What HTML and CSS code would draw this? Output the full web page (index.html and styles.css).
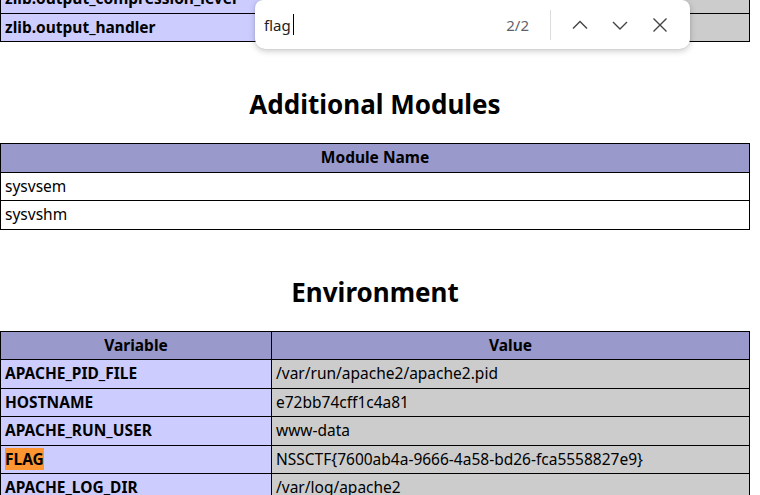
FILE: index.html
```html
<!DOCTYPE html>
<html lang="en">
<head>
<meta charset="utf-8">
<title>phpinfo()</title>
<link rel="stylesheet" href="styles.css">
</head>
<body>
<div class="page">
  <table class="info top">
    <tr><td class="e">zlib.output_compression_level</td><td class="v">-1</td><td class="v">-1</td></tr>
    <tr><td class="e">zlib.output_handler</td><td class="v"><i>no value</i></td><td class="v"><i>no value</i></td></tr>
  </table>

  <h2 class="section-title">Additional Modules</h2>
  <table class="info">
    <tr class="h"><th>Module Name</th></tr>
    <tr><td>sysvsem</td></tr>
    <tr><td>sysvshm</td></tr>
  </table>

  <h2 class="section-title">Environment</h2>
  <table class="info env">
    <tr class="h"><th class="col-var">Variable</th><th>Value</th></tr>
    <tr><td class="e">APACHE_PID_FILE</td><td class="v">/var/run/apache2/apache2.pid</td></tr>
    <tr><td class="e">HOSTNAME</td><td class="v">e72bb74cff1c4a81</td></tr>
    <tr><td class="e">APACHE_RUN_USER</td><td class="v">www-data</td></tr>
    <tr><td class="e"><mark class="hit">FLAG</mark></td><td class="v">NSSCTF{7600ab4a-9666-4a58-bd26-fca5558827e9}</td></tr>
    <tr><td class="e">APACHE_LOG_DIR</td><td class="v">/var/log/apache2</td></tr>
  </table>
</div>

<div class="findbar">
  <div class="find-input">flag<span class="caret"></span></div>
  <span class="find-count">2/2</span>
  <span class="find-sep"></span>
  <button class="find-btn" aria-label="Previous">
    <svg width="20" height="20" viewBox="0 0 20 20"><path d="M3 13.5 L10 6.5 L17 13.5" fill="none" stroke="#444" stroke-width="1.4"/></svg>
  </button>
  <button class="find-btn" aria-label="Next">
    <svg width="20" height="20" viewBox="0 0 20 20"><path d="M3 7 L10 14 L17 7" fill="none" stroke="#444" stroke-width="1.4"/></svg>
  </button>
  <button class="find-btn" aria-label="Close">
    <svg width="20" height="20" viewBox="0 0 20 20"><path d="M3.5 3.5 L16.5 16.5 M16.5 3.5 L3.5 16.5" fill="none" stroke="#444" stroke-width="1.4"/></svg>
  </button>
</div>
</body>
</html>
```

FILE: styles.css
```css
html, body {
  margin: 0;
  padding: 0;
  background: #fff;
  color: #000;
  font-family: "Noto Sans", "Open Sans", sans-serif;
  overflow: hidden;
}

.page {
  width: 750px;
}

.info {
  width: 750px;
  border-collapse: collapse;
  table-layout: fixed;
  font-size: 15.5px;
}

.info td, .info th {
  border: 1px solid #000;
  padding: 4px 4px 4px 4px;
  line-height: 19.5px;
  text-align: left;
  white-space: nowrap;
  overflow: hidden;
  background: #fff;
}

.info th {
  background: #9999cc;
  text-align: center;
  font-weight: bold;
}

.info td.e {
  background: #ccccff;
  font-weight: bold;
}

.info td.v {
  background: #cccccc;
}

.top {
  margin-top: -16px;
}

.top td.e { width: 262px; }
.top td.v { width: 220px; }

.env .col-var { width: 262px; }

.section-title {
  margin: 44px 0 21px;
  font-size: 26px;
  line-height: 36px;
  text-align: center;
  font-weight: bold;
}

.hit {
  background: #ff9632;
  color: #000;
  padding: 0;
}

/* Find bar overlay */
.findbar {
  position: absolute;
  left: 255px;
  top: 0;
  width: 435px;
  height: 49px;
  box-sizing: border-box;
  background: #fff;
  border-radius: 8px 8px 10px 10px;
  box-shadow: 0 2px 6px rgba(0,0,0,0.22), 0 0 1px rgba(0,0,0,0.2);
  display: flex;
  align-items: center;
  padding: 0 20px 0 9px;
  font-family: "Noto Sans", "Open Sans", sans-serif;
  font-size: 15px;
}

.find-input {
  flex: 1;
  display: flex;
  align-items: center;
  color: #222;
}

.caret {
  display: inline-block;
  width: 1px;
  height: 21px;
  background: #000;
  margin-left: 2px;
}

.find-count {
  color: #5f6368;
  margin-right: 21px;
}

.find-sep {
  width: 1px;
  height: 30px;
  background: #dcdcdc;
  margin-right: 19px;
}

.find-btn {
  width: 20px;
  height: 20px;
  padding: 0;
  border: 0;
  background: none;
  display: flex;
  align-items: center;
  justify-content: center;
  margin-right: 20px;
}

.find-btn:last-child {
  margin-right: 0;
}

.find-btn svg {
  display: block;
}
```
